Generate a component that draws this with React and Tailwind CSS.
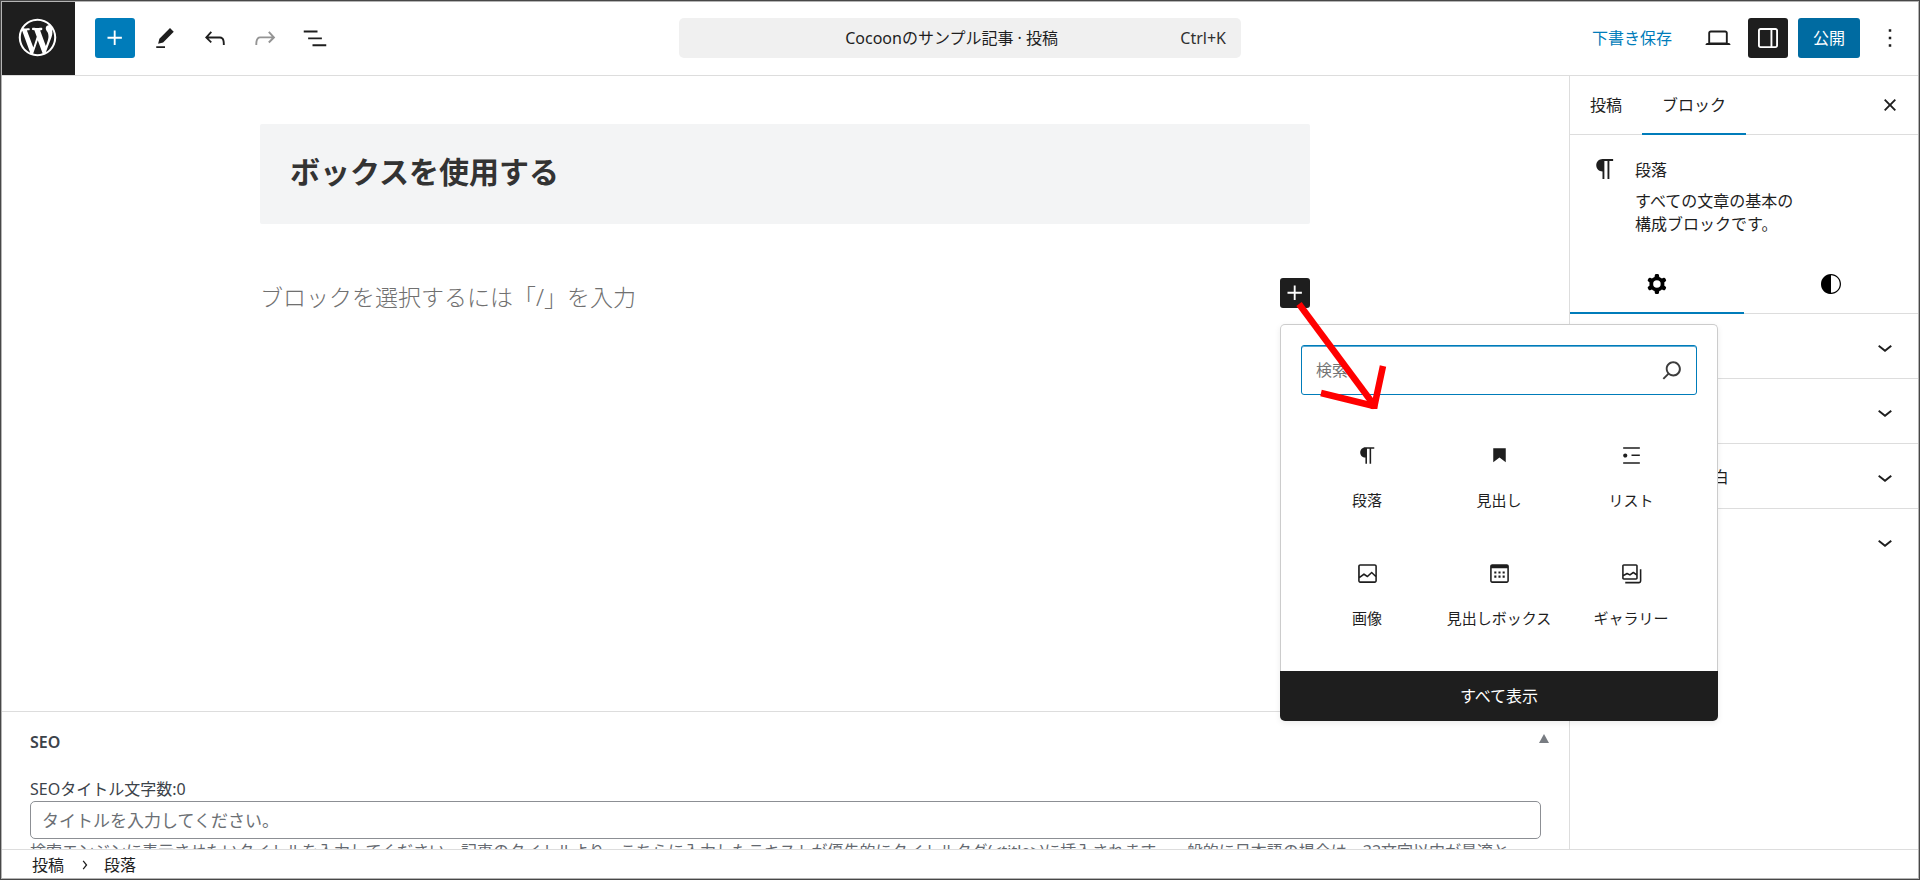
import { useState } from "react";

const icons = {
    plus: "M11 12.5V17.5H12.5V12.5H17.5V11H12.5V6H11V11H6V12.5H11Z",
    edit: "m19 7-3-3-8.5 8.5-1 4 4-1L19 7Zm-7 11.5H5V20h7v-1.5Z",
    undo: "M18.3 11.7c-.6-.6-1.4-.9-2.3-.9H6.7l2.9-3.3-1.1-1-4.5 5L8.5 16l1-1-2.7-2.7H16c.5 0 .9.2 1.3.5 1 1 1 3.4 1 4.5v.3h1.5v-.2c0-1.5 0-4.3-1.5-5.7z",
    redo: "M15.6 6.5l-1.1 1 2.9 3.3H8c-.9 0-1.7.3-2.3.9-1.4 1.5-1.4 4.2-1.4 5.6v.2h1.5v-.3c0-1.1 0-3.5 1-4.5.3-.3.7-.5 1.3-.5h9.2L14.5 15l1.1 1.1 4.6-4.6-4.6-5z",
    listView: "M3 6h11v1.5H3V6Zm3.5 5.5h11V13h-11v-1.5ZM21 17H10v1.5h11V17Z",
    desktop:
        "M20.5 16h-.7V8c0-1.1-.9-2-2-2H6.2c-1.1 0-2 .9-2 2v8h-.7c-.8 0-1.5.7-1.5 1.5h20c0-.8-.7-1.5-1.5-1.5zM5.7 8c0-.3.2-.5.5-.5h11.6c.3 0 .5.2.5.5v7.6H5.7V8z",
    drawer: "M18 4H6c-1.1 0-2 .9-2 2v12c0 1.1.9 2 2 2h12c1.1 0 2-.9 2-2V6c0-1.1-.9-2-2-2zm-4 14.5H6c-.3 0-.5-.2-.5-.5V6c0-.3.2-.5.5-.5h8v13zm4.5-.5c0 .3-.2.5-.5.5h-2.5v-13H18c.3 0 .5.2.5.5v12z",
    more: "M13 19h-2v-2h2v2zm0-6h-2v-2h2v2zm0-6h-2V5h2v2z",
    close: "M12 13.06l3.712 3.713 1.061-1.06L13.061 12l3.712-3.712-1.06-1.06L12 10.938 8.288 7.227l-1.061 1.06L10.939 12l-3.712 3.712 1.06 1.061L12 13.061z",
    cog: "M10.289 4.836A1 1 0 0111.275 4h1.306a1 1 0 01.987.836l.244 1.466c.787.26 1.503.679 2.108 1.218l1.393-.522a1 1 0 011.216.437l.653 1.13a1 1 0 01-.23 1.273l-1.148.944a6.025 6.025 0 010 2.435l1.149.946a1 1 0 01.23 1.272l-.653 1.13a1 1 0 01-1.216.437l-1.394-.522c-.605.54-1.32.958-2.108 1.218l-.244 1.466a1 1 0 01-.987.836h-1.306a1 1 0 01-.986-.836l-.244-1.466a5.995 5.995 0 01-2.108-1.218l-1.394.522a1 1 0 01-1.217-.436l-.653-1.131a1 1 0 01.23-1.272l1.149-.946a6.026 6.026 0 010-2.435l-1.148-.944a1 1 0 01-.23-1.272l.653-1.131a1 1 0 011.217-.437l1.393.522a5.994 5.994 0 012.108-1.218l.244-1.466zM14.929 12a3 3 0 11-6 0 3 3 0 016 0z",
    styles: "M12 4c-4.4 0-8 3.6-8 8v.1c0 4.1 3.2 7.5 7.2 7.9h.8c4.4 0 8-3.6 8-8s-3.6-8-8-8zm0 15V5c3.9 0 7 3.1 7 7s-3.1 7-7 7z",
    chevronDown: "M17.5 11.6L12 16l-5.5-4.4.9-1.2L12 14l4.5-3.6 1 1.2z",
    search: "M13 5c-3.3 0-6 2.7-6 6 0 1.4.5 2.7 1.3 3.7l-3.8 3.8 1.1 1.1 3.8-3.8c1 .8 2.3 1.3 3.7 1.3 3.3 0 6-2.7 6-6S16.3 5 13 5zm0 10.5c-2.5 0-4.5-2-4.5-4.5s2-4.5 4.5-4.5 4.5 2 4.5 4.5-2 4.5-4.5 4.5z",
    paragraph:
        "M10 14v6h1.5V5.5H14V20h1.5V5.5h3V4H10C7.24 4 5 6.24 5 9s2.24 5 5 5z",
    heading: "M6 5V18.5911L12 13.8473L18 18.5911V5H6Z",
    list: "M4 4v1.5h16V4H4zm8 8.5h8V11h-8v1.5zM4 20h16v-1.5H4V20zm4-8c0-1.1-.9-2-2-2s-2 .9-2 2 .9 2 2 2 2-.9 2-2z",
    image: "M19 3H5c-1.1 0-2 .9-2 2v14c0 1.1.9 2 2 2h14c1.1 0 2-.9 2-2V5c0-1.1-.9-2-2-2zM5 4.5h14c.3 0 .5.2.5.5v8.4l-3-2.9c-.3-.3-.8-.3-1 0L11.9 14 9 12c-.3-.2-.6-.2-.8 0l-3.6 2.6V5c-.1-.3.1-.5.4-.5zm14 15H5c-.3 0-.5-.2-.5-.5v-2.4l4.1-3 3 1.9c.3.2.7.2.9-.1L16 12l3.5 3.4V19c0 .3-.2.5-.5.5z",
    box: "M19 3H5c-1.1 0-2 .9-2 2v14c0 1.1.9 2 2 2h14c1.1 0 2-.9 2-2V5c0-1.1-.9-2-2-2zm.5 16c0 .3-.2.5-.5.5H5c-.3 0-.5-.2-.5-.5V7h15v12zM7 10h2v2H7v-2zm4 0h2v2h-2v-2zm4 0h2v2h-2v-2zM7 14h2v2H7v-2zm4 0h2v2h-2v-2zm4 0h2v2h-2v-2z",
    gallery:
        "M16.375 4.5H4.625a.125.125 0 0 0-.125.125v8.254l2.859-1.54a.75.75 0 0 1 .68-.016l2.384 1.142 2.89-2.074a.75.75 0 0 1 .874 0l2.313 1.66V4.625a.125.125 0 0 0-.125-.125Zm.125 9.398-2.75-1.975-2.813 2.02a.75.75 0 0 1-.76.067l-2.444-1.17L4.5 14.583v1.792c0 .069.056.125.125.125h11.75a.125.125 0 0 0 .125-.125v-2.477ZM4.625 3C3.728 3 3 3.728 3 4.625v11.75C3 17.273 3.728 18 4.625 18h11.75c.898 0 1.625-.727 1.625-1.625V4.625C18 3.728 17.273 3 16.375 3H4.625ZM20 8v11c0 .69-.31 1-.999 1H6v1.5h13.001c1.52 0 2.499-.982 2.499-2.5V8H20Z",
};

const blocks = [
    { icon: "paragraph", label: "段落" },
    { icon: "heading", label: "見出し" },
    { icon: "list", label: "リスト" },
    { icon: "image", label: "画像" },
    { icon: "box", label: "見出しボックス" },
    { icon: "gallery", label: "ギャラリー" },
];

const panels = ["色", "タイポグラフィ", "スペース : 外側余白", "高度な設定"];

const Icon = ({ name, className = "size-[30px]" }) => (
    <svg viewBox="0 0 24 24" fill="currentColor" aria-hidden="true" className={`shrink-0 ${className}`}>
        <path fillRule="evenodd" clipRule="evenodd" d={icons[name]} />
    </svg>
);

const ToolButton = ({ icon, label, className = "", ...props }) => (
    <button
        type="button"
        aria-label={label}
        className={`flex size-10 shrink-0 items-center justify-center rounded-[3px] ${className}`}
        {...props}
    >
        <Icon name={icon} />
    </button>
);

const Header = () => (
    <header className="grid h-[74px] shrink-0 grid-cols-[1fr_562px_1fr] border-b border-[#dddddd]">
        <div className="flex">
            <a href="#dashboard" aria-label="投稿一覧" className="size-[73px] shrink-0 bg-[#1e1e1e] p-[13px] text-white">
                <svg viewBox="-2 -2 24 24" fill="currentColor" className="size-[45px]">
                    <path d="M20 10c0-5.51-4.49-10-10-10C4.48 0 0 4.49 0 10c0 5.52 4.48 10 10 10 5.51 0 10-4.48 10-10zM7.78 15.37L4.37 6.22c.55-.02 1.17-.08 1.17-.08.5-.06.44-1.13-.06-1.11 0 0-1.45.11-2.37.11-.18 0-.37 0-.58-.01C4.12 2.69 6.87 1.11 10 1.11c2.33 0 4.45.87 6.05 2.34-.68-.11-1.65.39-1.65 1.58 0 .74.45 1.36.9 2.1.35.61.55 1.36.55 2.46 0 1.49-1.4 5-1.4 5l-3.03-8.37c.54-.02.82-.17.82-.17.5-.05.44-1.25-.06-1.22 0 0-1.44.12-2.38.12-.87 0-2.33-.12-2.33-.12-.5-.03-.56 1.2-.06 1.22l.92.08 1.26 3.41zM17.41 10c.24-.64.74-1.87.43-4.25.7 1.29 1.05 2.71 1.05 4.25 0 3.29-1.73 6.24-4.4 7.78.97-2.59 1.94-5.2 2.92-7.78zM6.1 18.09C3.12 16.65 1.11 13.53 1.11 10c0-1.3.23-2.48.72-3.59C3.25 10.3 4.67 14.2 6.1 18.09zm4.03-6.63l2.58 6.98c-.86.29-1.76.45-2.71.45-.79 0-1.57-.11-2.29-.33.81-2.38 1.62-4.74 2.42-7.1z" />
                </svg>
            </a>
            <div className="flex gap-[10px] pt-4 pl-5">
                <ToolButton icon="plus" label="ブロック挿入ツール" className="bg-[#007cba] text-white" />
                <ToolButton icon="edit" label="ツール" />
                <ToolButton icon="undo" label="元に戻す" />
                <ToolButton icon="redo" label="やり直す" className="text-[#949494]" disabled />
                <ToolButton icon="listView" label="リスト表示" />
            </div>
        </div>

        <div className="pt-4">
            <button
                type="button"
                className="flex h-10 w-full items-center rounded-[5px] bg-[#f0f0f0] pr-[15px] pl-11 text-base"
            >
                <span className="flex-1 text-center">Cocoonのサンプル記事 · 投稿</span>
                <span className="text-[#2f2f2f]">Ctrl+K</span>
            </button>
        </div>

        <div className="flex justify-end gap-[10px] pt-4 pr-2">
            <button type="button" className="h-10 px-4 text-base text-[#007cba]">
                下書き保存
            </button>
            <ToolButton icon="desktop" label="表示" />
            <ToolButton icon="drawer" label="設定" className="bg-[#1e1e1e] text-white" />
            <button type="button" className="h-10 rounded-[3px] bg-[#006ba1] px-[15px] text-base text-white">
                公開
            </button>
            <ToolButton icon="more" label="オプション" />
        </div>
    </header>
);

const InserterPopover = () => {
    const [query, setQuery] = useState("");

    return (
        <div className="absolute top-[46px] left-0 z-10 w-[438px] rounded-[5px] bg-white shadow-[0_2px_6px_rgba(0,0,0,0.08)]">
            <div className="rounded-t-[5px] border border-b-0 border-[#cccccc] px-5 pt-5 pb-3">
                <div className="relative">
                    <input
                        type="search"
                        aria-label="検索"
                        placeholder="検索"
                        value={query}
                        onChange={(e) => setQuery(e.target.value)}
                        className="block h-[50px] w-full rounded-[3px] border border-[#007cba] pr-12 pl-[14px] text-base shadow-[inset_0_1px_0_#5aa9d2] outline-none placeholder:text-[#757575]"
                    />
                    <Icon name="search" className="absolute top-[10px] right-[10px] size-[30px] text-[#3c3c3c]" />
                </div>

                <div className="mt-[28px] grid grid-cols-3">
                    {blocks.map((block) => (
                        <button
                            key={block.label}
                            type="button"
                            className="flex h-[118px] flex-col items-center gap-5 pt-5 text-[15px] leading-6 whitespace-nowrap"
                        >
                            <Icon name={block.icon} className="size-[25px]" />
                            {block.label}
                        </button>
                    ))}
                </div>
            </div>
            <button type="button" className="h-[50px] w-full rounded-b-[5px] bg-[#1e1e1e] text-base text-white">
                すべて表示
            </button>

            {/* Arrow from the plus button to the block list */}
            <svg
                viewBox="0 0 120 120"
                fill="none"
                stroke="#ff0000"
                strokeWidth="6.5"
                strokeLinejoin="bevel"
                className="pointer-events-none absolute -top-[30px] left-0 size-[120px]"
            >
                <path d="M19 10 94 111" />
                <path d="M103 72 94 114M94 112 41 99" />
                <path d="M94 108v7" />
            </svg>
        </div>
    );
};

const Editor = () => (
    <div className="flex-1 pt-12 pr-px">
        <div className="mx-auto max-w-[1050px]">
            <h2 className="rounded-[2px] bg-[#f3f4f5] px-[30px] pt-6 pb-7 text-[30px] leading-[48px] font-bold text-[#333333]">
                ボックスを使用する
            </h2>
            <div className="mt-[54px] flex items-start justify-between">
                <p className="text-[23px] leading-[38px] font-light text-[#707070]">
                    ブロックを選択するには「/」を入力
                </p>
                <div className="relative">
                    <button
                        type="button"
                        aria-label="ブロックを追加"
                        className="flex size-[30px] items-center justify-center rounded-[3px] bg-[#1e1e1e] text-white"
                    >
                        <Icon name="plus" />
                    </button>
                    <InserterPopover />
                </div>
            </div>
        </div>
    </div>
);

const SeoBox = () => (
    <section className="h-[138px] shrink-0 overflow-hidden border-t border-[#dddddd] px-7 text-base leading-6 text-[#3c434a]">
        <div className="flex items-start justify-between pt-[18px]">
            <h2 className="font-semibold">SEO</h2>
            <button type="button" aria-label="SEO パネルを閉じる" className="-mr-2 pt-1 text-[#787c82]">
                <svg viewBox="0 0 10 9" fill="currentColor" className="h-[9px] w-[10px]">
                    <path d="M5 0 10 9H0z" />
                </svg>
            </button>
        </div>
        <label htmlFor="seo-title" className="mt-6 block leading-[23px]">
            SEOタイトル文字数:0
        </label>
        <input
            id="seo-title"
            type="text"
            placeholder="タイトルを入力してください。"
            className="block h-[38px] w-full rounded-[5px] border border-[#8c8f94] px-[11px] text-[17px] placeholder:text-[#6b6f74]"
        />
        <p className="whitespace-nowrap text-[#646970]">
            検索エンジンに表示させたいタイトルを入力してください。記事のタイトルより、こちらに入力したテキストが優先的にタイトルタグ(&lt;title&gt;)に挿入されます。一般的に日本語の場合は、32文字以内が最適と
        </p>
    </section>
);

const Sidebar = () => {
    const [tab, setTab] = useState("ブロック");

    return (
        <aside className="w-[349px] shrink-0 border-l border-[#dddddd] text-base">
            <div className="flex h-[59px] items-start border-b border-[#dddddd] pr-2">
                {["投稿", "ブロック"].map((name) => (
                    <button
                        key={name}
                        type="button"
                        onClick={() => setTab(name)}
                        className={`h-[59px] px-5 ${tab === name ? "border-b-2 border-[#007cba]" : "border-b-2 border-transparent"}`}
                    >
                        {name}
                    </button>
                ))}
                <ToolButton icon="close" label="設定を閉じる" className="mt-[9px] ml-auto" />
            </div>

            <div className="flex gap-[15px] px-5 pt-[19px]">
                <Icon name="paragraph" />
                <div>
                    <h2 className="leading-8">段落</h2>
                    <p className="mt-1 w-[165px] leading-[23px]">すべての文章の基本の構成ブロックです。</p>
                </div>
            </div>

            <div className="mt-[18px] grid h-[60px] grid-cols-2 border-b border-[#dddddd] text-black">
                <button
                    type="button"
                    aria-label="設定"
                    className="flex h-[60px] items-center justify-center border-b-2 border-[#007cba] pt-[2px]"
                >
                    <Icon name="cog" />
                </button>
                <button type="button" aria-label="スタイル" className="flex h-[60px] items-center justify-center">
                    <Icon name="styles" />
                </button>
            </div>

            {panels.map((panel) => (
                <button
                    key={panel}
                    type="button"
                    className="flex h-[65px] w-full items-center justify-between border-b border-[#dddddd] pt-px pr-[18px] pl-5 last:border-b-0"
                >
                    {panel}
                    <Icon name="chevronDown" />
                </button>
            ))}
        </aside>
    );
};

const App = () => (
    <div className="h-screen border border-[#474747] font-['Noto_Sans','Noto_Sans_CJK_JP',sans-serif] text-[#1e1e1e]">
        <div className="flex h-full flex-col border border-[#b4b4b4] bg-white">
            <Header />
            <div className="flex min-h-0 flex-1">
                <main className="flex min-w-0 flex-1 flex-col">
                    <Editor />
                    <SeoBox />
                </main>
                <Sidebar />
            </div>
            <footer className="flex h-[29px] shrink-0 items-center gap-[10px] border-t border-[#dddddd] pt-[2px] pl-[30px] text-base">
                <a href="#post">投稿</a>
                <Icon name="chevronDown" className="size-5 -rotate-90" />
                <span>段落</span>
            </footer>
        </div>
    </div>
);

export default App;
